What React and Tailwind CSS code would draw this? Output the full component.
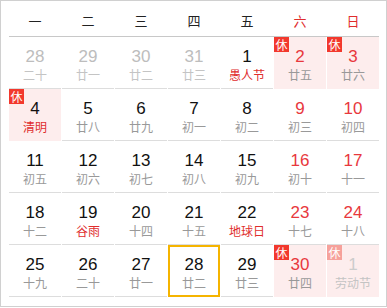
import React from 'react';

const WEEKDAYS = ['一', '二', '三', '四', '五', '六', '日'];

// tone: 'prev' | 'normal' | 'red' | 'next'
const DAYS = [
  { n: 28, l: '二十', tone: 'prev' },
  { n: 29, l: '廿一', tone: 'prev' },
  { n: 30, l: '廿二', tone: 'prev' },
  { n: 31, l: '廿三', tone: 'prev' },
  { n: 1, l: '愚人节', fest: true },
  { n: 2, l: '廿五', tone: 'red', rest: true },
  { n: 3, l: '廿六', tone: 'red', rest: true },

  { n: 4, l: '清明', fest: true, rest: true },
  { n: 5, l: '廿八' },
  { n: 6, l: '廿九' },
  { n: 7, l: '初一' },
  { n: 8, l: '初二' },
  { n: 9, l: '初三', tone: 'red' },
  { n: 10, l: '初四', tone: 'red' },

  { n: 11, l: '初五' },
  { n: 12, l: '初六' },
  { n: 13, l: '初七' },
  { n: 14, l: '初八' },
  { n: 15, l: '初九' },
  { n: 16, l: '初十', tone: 'red' },
  { n: 17, l: '十一', tone: 'red' },

  { n: 18, l: '十二' },
  { n: 19, l: '谷雨', fest: true },
  { n: 20, l: '十四' },
  { n: 21, l: '十五' },
  { n: 22, l: '地球日', fest: true },
  { n: 23, l: '十七', tone: 'red' },
  { n: 24, l: '十八', tone: 'red' },

  { n: 25, l: '十九' },
  { n: 26, l: '二十' },
  { n: 27, l: '廿一' },
  { n: 28, l: '廿二', today: true },
  { n: 29, l: '廿三' },
  { n: 30, l: '廿四', tone: 'red', rest: true },
  { n: 1, l: '劳动节', tone: 'next', rest: true },
];

const numColor = {
  prev: 'text-[#bdbdbd]',
  next: 'text-[#cccccc]',
  red: 'text-[#e8383d]',
  normal: 'text-[#111111]',
};

const DayCell = ({ day }) => {
  const tone = day.tone || 'normal';
  const faded = tone === 'prev' || tone === 'next';

  let lunarColor = 'text-[#999999]';
  if (faded) lunarColor = 'text-[#c4c4c4]';
  else if (day.fest) lunarColor = 'text-[#e02d2d]';

  let box = 'border-b border-[#dddddd] pt-[10px]';
  if (day.rest) box = 'bg-[#fdeded] pt-[10px]';
  if (day.today) box = 'border-2 border-[#f5b400] pt-[8px]';

  return (
    <div className={`relative h-[52px] flex flex-col items-center ${box}`}>
      {day.rest && (
        <span
          className={`absolute left-0 top-0 w-[15px] h-[15px] flex items-center justify-center text-[12px] leading-none text-white ${
            tone === 'next' ? 'bg-[#f6a19b]' : 'bg-[#f2382d]'
          }`}
        >
          休
        </span>
      )}
      <span className={`h-[20px] text-[17px] leading-[20px] font-['Liberation_Sans',sans-serif] ${numColor[tone]}`}>
        {day.n}
      </span>
      <span className={`mt-px h-[14px] text-[12px] leading-[14px] ${lunarColor}`}>{day.l}</span>
    </div>
  );
};

export default function App() {
  return (
    <div className="w-[387px] h-[307px] bg-white border border-[#d0d0d0] pl-2 pr-[7px] font-['Noto_Sans_CJK_SC',sans-serif]">
      {/* Weekday header */}
      <div className="grid grid-cols-7 gap-x-px h-9 pt-1 border-b border-[#c8c8c8]">
        {WEEKDAYS.map((w, i) => (
          <div
            key={w}
            className={`flex items-center justify-center text-[13px] ${i >= 5 ? 'text-[#e02d2d]' : 'text-[#222222]'}`}
          >
            {w}
          </div>
        ))}
      </div>

      {/* Days */}
      <div className="grid grid-cols-7 gap-x-px">
        {DAYS.map((d, i) => (
          <DayCell key={i} day={d} />
        ))}
      </div>
    </div>
  );
}
